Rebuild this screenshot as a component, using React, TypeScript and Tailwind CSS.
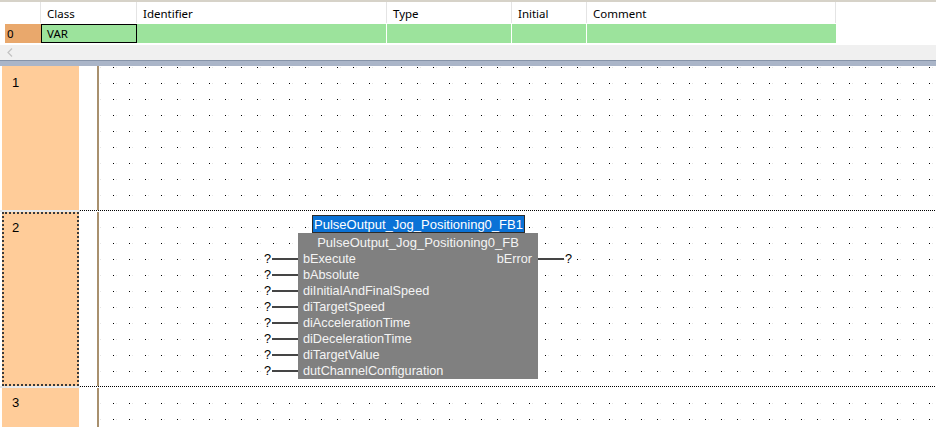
import React from 'react';

const columns = ['Class', 'Identifier', 'Type', 'Initial', 'Comment'];

const colW = ['w-[96px]', 'w-[250px]', 'w-[125px]', 'w-[75px]', 'w-[249px]'];

const inputs = [
  'bExecute',
  'bAbsolute',
  'diInitialAndFinalSpeed',
  'diTargetSpeed',
  'diAccelerationTime',
  'diDecelerationTime',
  'diTargetValue',
  'dutChannelConfiguration',
];

function VarTable() {
  return (
    <div className="border-t-2 border-[#d6d2c8] font-['Noto_Sans',sans-serif] text-[11.5px] text-black">
      {/* header */}
      <div className="flex h-[21px] bg-white">
        <div className="w-[41px] border-r border-[#e4e4e4]" />
        {columns.map((c, i) => (
          <div key={c} className={`${colW[i]} flex items-center border-r border-[#e4e4e4] pl-[6px] pt-[2px]`}>
            {c}
          </div>
        ))}
        <div className="flex-1" />
      </div>
      {/* row 0 */}
      <div className="mt-px flex h-[19px] bg-white">
        <div className="w-[41px] pl-[5px]">
          <div className="flex h-full items-center bg-[#e9a86c] pl-[2px] pt-px">0</div>
        </div>
        <div className="flex w-[96px] items-center border border-black bg-[#9ce39c] pl-[5px] pt-px">VAR</div>
        <div className="w-[250px] border-r border-white bg-[#9ce39c]" />
        <div className="w-[125px] border-r border-white bg-[#9ce39c]" />
        <div className="w-[75px] border-r border-white bg-[#9ce39c]" />
        <div className="w-[249px] bg-[#9ce39c]" />
        <div className="flex-1" />
      </div>
      {/* horizontal scrollbar */}
      <div className="mt-px flex h-[16px] items-center border-t border-white bg-[#f0f0f0] pl-[7px]">
        <svg width="6" height="9" viewBox="0 0 6 9">
          <path d="M5 0.5 L1 4.5 L5 8.5" fill="none" stroke="#c2c2c2" strokeWidth="1.2" />
        </svg>
      </div>
      <div className="h-[6px] border-t border-[#8693a8] bg-[#aab5c8]" />
    </div>
  );
}

function Separator() {
  return (
    <div className="flex h-[2px] bg-white">
      <div className="w-[80px] bg-[#e8e8e8]" />
      <div className="h-px flex-1 bg-[repeating-linear-gradient(90deg,#000_0_1px,transparent_1px_2px)]" />
    </div>
  );
}

function LadderRow({ n, h, selected, top = 'pt-[7px]' }: { n: number; h: string; selected?: boolean; top?: string }) {
  return (
    <div className={`flex ${h}`}>
      <div className="flex w-[99px] bg-white">
        <div className="w-[2px]" />
        <div
          className={`w-[77px] bg-[#ffcc99] font-['Liberation_Sans',Arial,sans-serif] text-[13px] text-black ${
            selected ? 'border-2 border-dotted border-[#3a3a3a] pl-[8px] pt-[4px]' : `pl-[10px] ${top}`
          }`}
        >
          {n}
        </div>
        <div className="w-[18px]" />
        <div className="w-[2px] bg-[#a8906e]" />
      </div>
      <div className="flex-1" />
    </div>
  );
}

function FunctionBlock() {
  return (
    <div className="absolute left-[262px] top-[149px] font-['Liberation_Sans',Arial,sans-serif] text-[12.7px] leading-none">
      <div className="ml-[50px] flex h-[18px] w-[213px] items-center justify-center border border-[#2a2a2a] bg-[#0a72d6] text-[13px] text-white">
        PulseOutput_Jog_Positioning0_FB1
      </div>
      <div className="flex">
        <div className="w-[36px] pt-[18px]">
          {inputs.map((p) => (
            <div key={p} className="flex h-[16px] items-center justify-end">
              <span className="mr-[1px] text-black">?</span>
              <div className="h-[2px] w-[26px] bg-[#454545]" />
            </div>
          ))}
        </div>
        <div className="w-[240px] bg-[#808080] text-[#f4f4f4]">
          <div className="flex h-[18px] items-center justify-center text-[13px]">PulseOutput_Jog_Positioning0_FB</div>
          {inputs.map((p, i) => (
            <div key={p} className="flex h-[16px] items-center justify-between pl-[5px] pr-[6px]">
              <span>{p}</span>
              {i === 0 && <span>bError</span>}
            </div>
          ))}
        </div>
        <div className="pt-[18px]">
          <div className="flex h-[16px] items-center">
            <div className="h-[2px] w-[26px] bg-[#454545]" />
            <span className="ml-[1px] text-black">?</span>
          </div>
        </div>
      </div>
    </div>
  );
}

function Ladder() {
  return (
    <div className="relative flex-1 overflow-hidden bg-white">
      <svg className="absolute inset-0 h-full w-full" aria-hidden="true">
        <defs>
          <pattern id="grid" x="0" y="0" width="16" height="16" patternUnits="userSpaceOnUse">
            <rect x="1" y="1" width="1" height="1" fill="#000" />
            <rect x="4" y="1" width="1" height="1" fill="#e6e6e6" />
          </pattern>
        </defs>
        <rect width="100%" height="100%" fill="url(#grid)" />
      </svg>
      <div className="relative flex h-full flex-col">
        <LadderRow n={1} h="h-[144px]" />
        <Separator />
        <LadderRow n={2} h="h-[174px]" selected />
        <Separator />
        <LadderRow n={3} h="flex-1" top="pt-[5px]" />
      </div>
      <FunctionBlock />
    </div>
  );
}

export default function App() {
  return (
    <div className="flex h-[427px] w-[936px] flex-col overflow-hidden bg-white">
      <VarTable />
      <Ladder />
    </div>
  );
}
